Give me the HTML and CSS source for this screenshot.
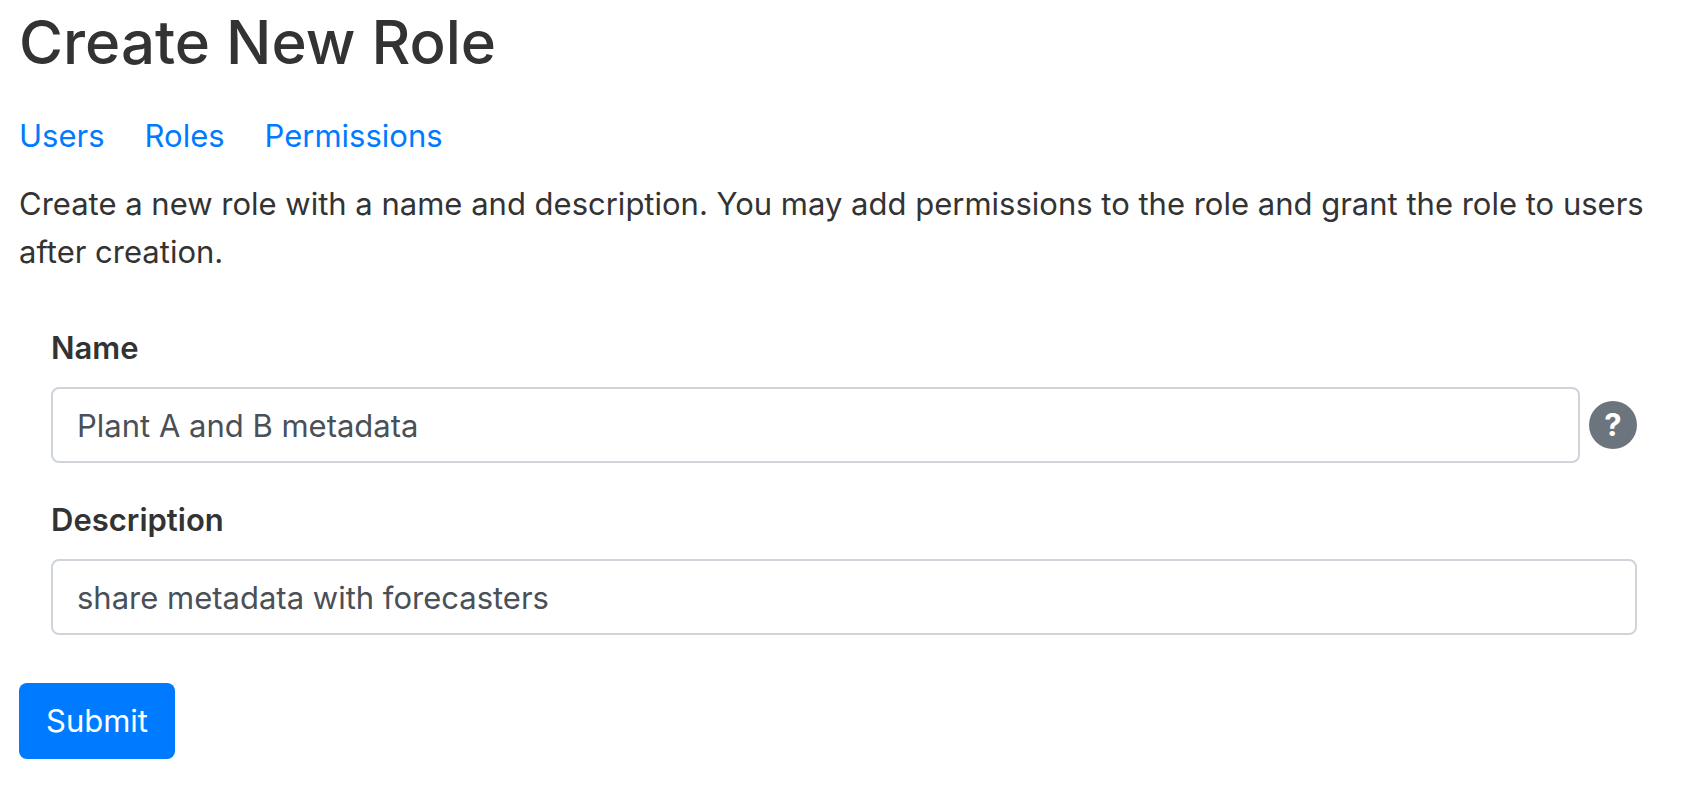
FILE: index.html
```html
<!DOCTYPE html>
<html lang="en">
<head>
<meta charset="utf-8">
<title>Create New Role</title>
<link rel="stylesheet" href="styles.css">
</head>
<body>
<main class="page">
  <h1 class="title">Create New Role</h1>
  <nav class="tabs">
    <a href="#users">Users</a>
    <a href="#roles">Roles</a>
    <a href="#permissions">Permissions</a>
  </nav>
  <p class="intro">Create a new role with a name and description. You may add permissions to the role and grant the role to users after creation.</p>
  <form class="form">
    <div class="fields">
      <div class="field">
        <label for="name">Name</label>
        <div class="row">
          <input class="control" id="name" type="text" value="Plant A and B metadata">
          <button class="help" type="button" aria-label="Help">?</button>
        </div>
      </div>
      <div class="field">
        <label for="description">Description</label>
        <input class="control" id="description" type="text" value="share metadata with forecasters">
      </div>
    </div>
    <button class="submit" type="submit">Submit</button>
  </form>
</main>
</body>
</html>
```
FILE: styles.css
```css
* {
  box-sizing: border-box;
}

body {
  margin: 0;
  background: #fff;
  color: #333;
  font-family: Inter, "Liberation Sans", sans-serif;
  font-size: 31px;
  line-height: 48px;
}

.page {
  padding: 4px 33px 24px 19px;
}

.title {
  margin: 0 0 32px;
  font-size: 60px;
  font-weight: 500;
  line-height: 76px;
}

.tabs {
  display: flex;
  gap: 40px;
  margin-bottom: 20px;
}

.tabs a {
  color: #007bff;
  text-decoration: none;
}

.intro {
  margin: 0 0 48px;
}

.fields {
  display: flex;
  flex-direction: column;
  gap: 33px;
  margin-bottom: 48px;
  padding: 0 32px;
}

.field label {
  display: block;
  margin-bottom: 15px;
  font-weight: 600;
}

.row {
  display: flex;
  align-items: center;
  gap: 9px;
}

.control {
  display: block;
  flex: 1;
  width: 100%;
  min-width: 0;
  height: 76px;
  padding: 0 24px;
  border: 2px solid #ced4da;
  border-radius: 8px;
  background: #fff;
  color: #495057;
  font: inherit;
}

.help {
  width: 48px;
  height: 48px;
  padding: 0;
  border: 0;
  border-radius: 50%;
  background: #6c757d;
  color: #fff;
  font: inherit;
  font-weight: 700;
}

.submit {
  display: block;
  height: 76px;
  padding: 0 27px;
  border: 0;
  border-radius: 8px;
  background: #007bff;
  color: #fff;
  font: inherit;
}
```
